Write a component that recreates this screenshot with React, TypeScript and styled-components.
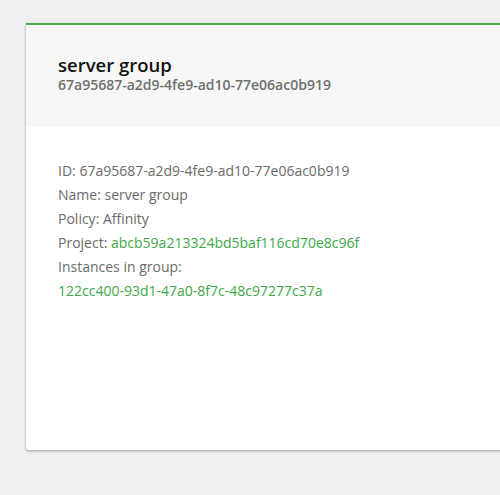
import styled, { createGlobalStyle } from 'styled-components'

const GlobalStyle = createGlobalStyle`
  html, body {
    margin: 0;
    padding: 0;
    background: #f0f0f0;
    font-family: 'Open Sans', 'Noto Sans', sans-serif;
    overflow: hidden;
  }
`

const Page = styled.div`
  padding: 23px 0 0 26px;
  width: 500px;
  height: 495px;
  box-sizing: border-box;
  overflow: hidden;
`

const Card = styled.div`
  width: 500px;
  height: 425px;
  background: #fff;
  border-top: 2px solid #4caf50;
  border-radius: 0 0 3px 3px;
  box-shadow: 0 1px 3px rgba(0, 0, 0, 0.35);
  display: flex;
  flex-direction: column;
`

const Header = styled.div`
  background: #f7f7f7;
  height: 102px;
  box-sizing: border-box;
  padding: 29px 32px 0;
`

const Title = styled.div`
  font-size: 18.5px;
  font-weight: 600;
  color: #111;
  line-height: 22px;
`

const Subtitle = styled.div`
  font-size: 14px;
  font-weight: 600;
  color: #6f6f6f;
  line-height: 18px;
`

const Body = styled.div`
  padding: 32px 32px 0;
  display: flex;
  flex-direction: column;
`

const Line = styled.div`
  font-size: 14px;
  color: #6b6b6b;
  line-height: 24px;
`

const Link = styled.span`
  color: #3ea64a;
`

const App = () => {
  return (
    <Page>
      <GlobalStyle />
      <Card>
        <Header>
          <Title>server group</Title>
          <Subtitle>67a95687-a2d9-4fe9-ad10-77e06ac0b919</Subtitle>
        </Header>
        <Body>
          <Line>ID: 67a95687-a2d9-4fe9-ad10-77e06ac0b919</Line>
          <Line>Name: server group</Line>
          <Line>Policy: Affinity</Line>
          <Line>
            Project: <Link>abcb59a213324bd5baf116cd70e8c96f</Link>
          </Line>
          <Line>Instances in group:</Line>
          <Line>
            <Link>122cc400-93d1-47a0-8f7c-48c97277c37a</Link>
          </Line>
        </Body>
      </Card>
    </Page>
  )
}

export default App
